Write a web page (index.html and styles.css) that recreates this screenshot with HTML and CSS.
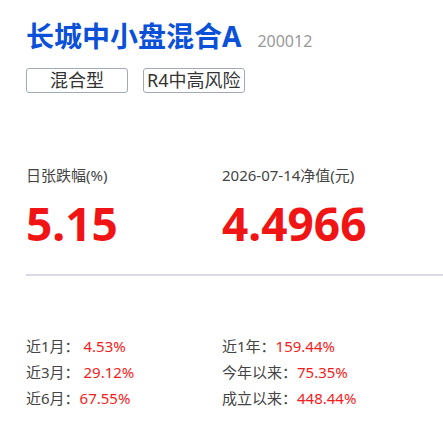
FILE: index.html
```html
<!DOCTYPE html>
<html lang="zh-CN">
<head>
  <meta charset="UTF-8">
  <title>长城中小盘混合A</title>
  <link rel="stylesheet" href="styles.css">
</head>
<body>

<div class="fund">
  <div class="fund-head">
    <h1 class="fund-name">长城中小盘混合A</h1>
    <span class="fund-code">200012</span>
  </div>
  <div class="tags">
    <span class="tag tag-wide">混合型</span>
    <span class="tag">R4中高风险</span>
  </div>

  <div class="quote">
    <div class="quote-item">
      <div class="quote-label">日张跌幅(%)</div>
      <div class="quote-value">5.15</div>
    </div>
    <div class="quote-item">
      <div class="quote-label">2026-07-14净值(元)</div>
      <div class="quote-value">4.4966</div>
    </div>
  </div>

  <div class="divider"></div>

  <div class="returns">
    <div class="ret">近1月：&nbsp;<span class="up">4.53%</span></div>
    <div class="ret">近1年：<span class="up">159.44%</span></div>
    <div class="ret">近3月：&nbsp;<span class="up">29.12%</span></div>
    <div class="ret">今年以来：<span class="up">75.35%</span></div>
    <div class="ret">近6月：<span class="up">67.55%</span></div>
    <div class="ret">成立以来：<span class="up">448.44%</span></div>
  </div>
</div>

</body>
</html>
```

FILE: styles.css
```css
body { margin: 0; background: #fff; font-family: "Noto Sans", "Noto Sans CJK SC", sans-serif; color: #333; }
.fund { padding: 18px 0 0 26px; }
.fund-head { display: flex; align-items: baseline; gap: 16px; }
.fund-name { margin: 0; font-size: 28px; line-height: 36px; font-weight: bold; color: #0a50d8; }
.fund-code { font-size: 16px; color: #999; }
.tags { display: flex; gap: 15px; margin-top: 14px; }
.tag { box-sizing: border-box; height: 25px; line-height: 23px; padding: 0 3px; border: 1px solid #a3a9b6; border-radius: 3px; font-size: 18px; color: #333; text-align: center; }
.tag-wide { width: 102px; }
.quote { display: grid; grid-template-columns: 196px 1fr; margin-top: 72px; }
.quote-label { font-size: 15px; line-height: 20px; color: #444; }
.quote-value { margin-top: 10px; font-size: 46px; line-height: 56px; font-weight: bold; color: #f01414; }
.divider { height: 2px; background: #d9d9e3; margin-top: 23px; }
.returns { display: grid; grid-template-columns: 196px 1fr; row-gap: 6px; margin-top: 60px; }
.ret { font-size: 15px; line-height: 20px; color: #444; }
.ret .up { color: #f51c20; }
```
